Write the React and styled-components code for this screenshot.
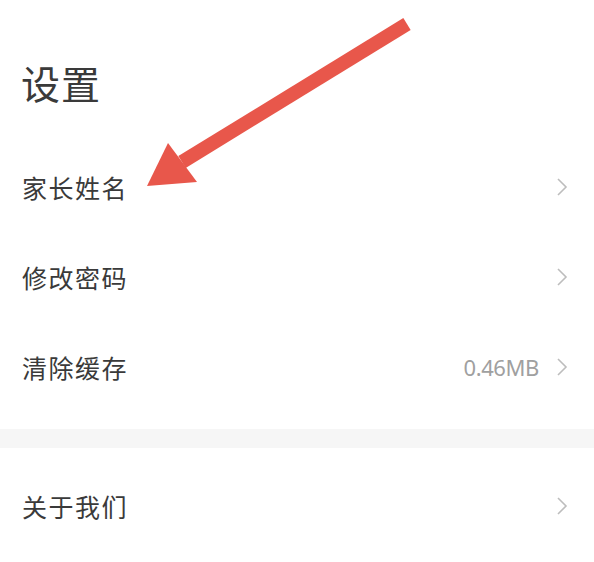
import React from 'react'
import styled, { createGlobalStyle } from 'styled-components'

const GlobalStyle = createGlobalStyle`
  html, body {
    margin: 0;
    padding: 0;
    background: #ffffff;
  }
  body {
    font-family: "Noto Sans CJK SC", "Noto Sans", sans-serif;
  }
`

const Page = styled.div`
  position: relative;
  width: 594px;
  height: 562px;
  overflow: hidden;
  background: #fff;
`

const Title = styled.h1`
  margin: 0;
  padding: 60px 0 0 21px;
  height: 78px;
  box-sizing: border-box;
  font-size: 39px;
  line-height: 44px;
  font-weight: 400;
  color: #3a3a3a;
  letter-spacing: 1px;
`

const List = styled.div`
  display: flex;
  flex-direction: column;
  padding-top: ${p => p.$top || 0}px;
`

const Row = styled.div`
  display: flex;
  align-items: center;
  justify-content: space-between;
  height: 90px;
  padding: 0 26px 0 22px;
`

const Label = styled.span`
  font-size: 25px;
  color: #3a3a3a;
  letter-spacing: 1.5px;
`

const Right = styled.div`
  display: flex;
  align-items: center;
  gap: 17px;
`

const Value = styled.span`
  font-family: "Noto Sans", sans-serif;
  font-size: 22px;
  color: #a0a0a0;
  letter-spacing: -0.4px;
`

const Band = styled.div`
  height: 19px;
  margin-top: 17px;
  background: #f6f6f6;
`

const Overlay = styled.svg`
  position: absolute;
  left: 0;
  top: 0;
  pointer-events: none;
`

const Chevron = () => (
  <svg width="12" height="20" viewBox="0 0 12 20">
    <path d="M2 2 L10 10 L2 18" fill="none" stroke="#bdbdbd" strokeWidth="1.6" />
  </svg>
)

const items = [
  { label: '家长姓名' },
  { label: '修改密码' },
  { label: '清除缓存', value: '0.46MB' },
]

const Item = ({ label, value }) => (
  <Row>
    <Label>{label}</Label>
    <Right>
      {value && <Value>{value}</Value>}
      <Chevron />
    </Right>
  </Row>
)

export default function App() {
  return (
    <Page>
      <GlobalStyle />
      <Title>设置</Title>
      <List $top={64}>
        {items.map(it => <Item key={it.label} {...it} />)}
      </List>
      <Band />
      <List $top={13}>
        <Item label="关于我们" />
      </List>
      <Overlay width="594" height="562">
        <line x1="407" y1="24" x2="182" y2="162" stroke="#e8574b" strokeWidth="14" />
        <polygon points="147,186 168,143 197,182" fill="#e8574b" />
      </Overlay>
    </Page>
  )
}
